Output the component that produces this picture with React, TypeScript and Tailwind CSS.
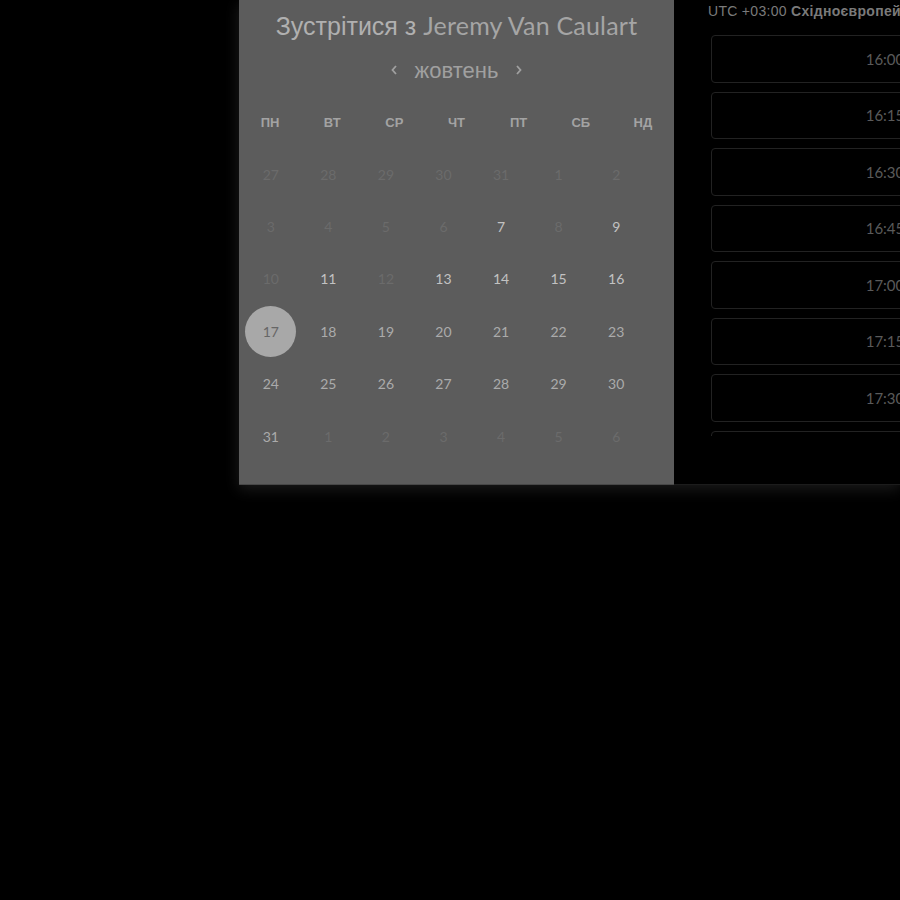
import React from "react";

type Day = { d: number; tone: "off" | "on" | "mid" | "sel" };

const rows: Day[][] = [
  [27, 28, 29, 30, 31, 1, 2].map((d) => ({ d, tone: "off" as const })),
  [
    { d: 3, tone: "off" },
    { d: 4, tone: "off" },
    { d: 5, tone: "off" },
    { d: 6, tone: "off" },
    { d: 7, tone: "on" },
    { d: 8, tone: "off" },
    { d: 9, tone: "on" },
  ],
  [
    { d: 10, tone: "off" },
    { d: 11, tone: "on" },
    { d: 12, tone: "off" },
    { d: 13, tone: "on" },
    { d: 14, tone: "on" },
    { d: 15, tone: "on" },
    { d: 16, tone: "on" },
  ],
  [
    { d: 17, tone: "sel" },
    { d: 18, tone: "mid" },
    { d: 19, tone: "mid" },
    { d: 20, tone: "mid" },
    { d: 21, tone: "mid" },
    { d: 22, tone: "mid" },
    { d: 23, tone: "mid" },
  ],
  [24, 25, 26, 27, 28, 29, 30].map((d) => ({ d, tone: "mid" as const })),
  [
    { d: 31, tone: "mid" },
    ...[1, 2, 3, 4, 5, 6].map((d) => ({ d, tone: "off" as const })),
  ],
];

const weekdays = ["ПН", "ВТ", "СР", "ЧТ", "ПТ", "СБ", "НД"];
const slots = ["16:00", "16:15", "16:30", "16:45", "17:00", "17:15", "17:30", "17:45"];

function DayCell({ day }: { day: Day }) {
  if (day.tone === "sel") {
    return (
      <div className="h-[52.4px] flex items-center justify-center">
        <div className="w-[51px] h-[51px] rounded-full bg-[#a8a8a8] flex items-center justify-center text-[#666666]">
          {day.d}
        </div>
      </div>
    );
  }
  const color =
    day.tone === "off" ? "text-[#6b6b6b]" : day.tone === "on" ? "text-[#c2c2c2]" : "text-[#ababab]";
  return <div className={`h-[52.4px] flex items-center justify-center ${color}`}>{day.d}</div>;
}

export default function App() {
  return (
    <div className="w-[900px] h-[900px] bg-black overflow-hidden" style={{ fontFamily: "Lato, 'Noto Sans', sans-serif" }}>
      <div className="flex ml-[239px] w-[661px] h-[485px] shadow-[0_4px_14px_rgba(40,40,40,0.7)]">
        <div className="w-[435px] h-[485px] shrink-0 bg-[#5c5c5c] border-b border-[#484848] flex flex-col">
          <div className="h-[50px] pt-[9px] text-center text-[25px] leading-[32px] text-[#a8a8a8] whitespace-nowrap">
            <span style={{ fontFamily: "'Liberation Sans', Arial, sans-serif" }} className="text-[#b0b0b0]">
              Зустрітися з{" "}
            </span>
            <span className="text-[#a5a5a5] tracking-[0.2px]">Jeremy Van Caulart</span>
          </div>
          <div className="h-[40px] flex items-center justify-center gap-[13px] text-[#a0a0a0]" style={{ fontFamily: "'Liberation Sans', Arial, sans-serif" }}>
            <svg width="8" height="12" viewBox="0 0 8 12" className="mr-[4px]">
              <path d="M6 2 L2.5 6 L6 10" stroke="#a0a0a0" strokeWidth="1.8" fill="none" />
            </svg>
            <span className="text-[22px]">жовтень</span>
            <svg width="8" height="12" viewBox="0 0 8 12" className="ml-[4px]">
              <path d="M2 2 L5.5 6 L2 10" stroke="#a0a0a0" strokeWidth="1.8" fill="none" />
            </svg>
          </div>
          <div className="grid grid-cols-7 h-[58px] pt-[8px] items-center text-[13px] font-bold text-[#a3a3a3]" style={{ fontFamily: "'Liberation Sans', Arial, sans-serif" }}>
            {weekdays.map((w) => (
              <div key={w} className="text-center">{w}</div>
            ))}
          </div>
          <div className="ml-[3px] w-[403px] grid grid-cols-7 text-[14px]">
            {rows.flat().map((day, i) => (
              <DayCell key={i} day={day} />
            ))}
          </div>
        </div>
        <div className="flex-1 h-[485px] bg-black border-b border-[#1c1c1c] overflow-hidden">
          <div className="pl-[34px] h-[20px] pt-[1px] text-[14px] tracking-[0.3px] text-[#7a7a7a] whitespace-nowrap" style={{ fontFamily: "'Liberation Sans', Arial, sans-serif" }}>
            UTC +03:00 <span className="font-bold">Східноєвропейський час</span>
          </div>
          <div className="ml-[37px] mt-[15px] h-[401px] overflow-hidden flex flex-col gap-[9px]">
            {slots.map((s) => (
              <div
                key={s}
                className="w-[348px] h-[47.5px] shrink-0 rounded-[4px] border border-[#222222] flex items-center justify-center text-[15px] text-[#5a5a5a]"
              >
                {s}
              </div>
            ))}
          </div>
        </div>
      </div>
    </div>
  );
}
